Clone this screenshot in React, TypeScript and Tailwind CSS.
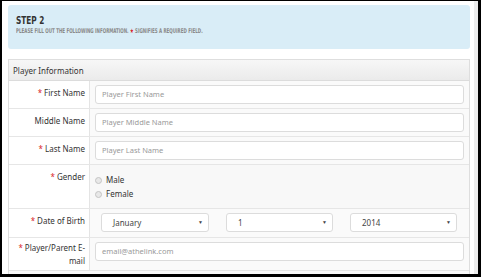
import React from "react";

const Star = () => <span className="text-[#d9262c] mr-[2px]">*</span>;

const Label = ({ req, children }: { req?: boolean; children: React.ReactNode }) => (
  <div className="w-[81px] shrink-0 border-r border-[#e4e4e4] bg-white pr-[4px] pt-[5px] text-right text-[8px] leading-[13px] text-[#333]">
    {req && <Star />}
    {children}
  </div>
);

const Input = ({ ph }: { ph: string }) => (
  <div className="h-[19px] w-full rounded-[3px] border border-[#dcdcdc] bg-white pl-[6px] text-[7.5px] leading-[17px] text-[#999]">
    {ph}
  </div>
);

const Select = ({ v, w }: { v: string; w: string }) => (
  <div className={`flex h-[19px] ${w} items-center justify-between rounded-[3px] border border-[#dcdcdc] bg-white pl-[11px] pr-[5px] text-[8px] text-[#444]`}>
    <span>{v}</span>
    <span className="text-[5px] text-[#444]">▼</span>
  </div>
);

export default function App() {
  return (
    <div className="h-[277px] w-[481px] bg-black pl-[2px] pt-[1px]" style={{ fontFamily: '"Noto Sans", "Liberation Sans", sans-serif' }}>
      <div className="flex h-[273px] w-[476px] overflow-hidden bg-white">
        <div className="w-[472px] shrink-0 pl-[6px] pt-[4px]">
          <div className="h-[44px] w-[462px] rounded-[3px] bg-[#d9edf7] pl-[8px] pt-[9px]" style={{ fontFamily: '"DejaVu Sans Condensed", "Liberation Sans", sans-serif' }}>
            <div className="origin-left scale-x-[0.78] text-[10.5px] font-bold leading-[12px] text-[#333]">STEP 2</div>
            <div className="mt-[1px] w-[400px] origin-left scale-x-[0.69] whitespace-nowrap text-[6.5px] font-bold leading-[9px] text-[#8a8a8a]">
              PLEASE FILL OUT THE FOLLOWING INFORMATION. <span className="text-[#d9262c]">★</span> SIGNIFIES A REQUIRED FIELD.
            </div>
          </div>
          <div className="mt-[10px] w-[462px] border border-[#dedede]">
            <div className="h-[21px] border-b border-[#dcdcdc] bg-gradient-to-b from-[#f7f7f7] to-[#ebebeb] pl-[4px] text-[8px] leading-[21px] text-[#333]">
              Player Information
            </div>
            <div className="flex h-[28px] border-b border-[#e6e6e6]">
              <Label req>First Name</Label>
              <div className="flex-1 bg-[#fafafa] px-[5px] pt-[4px]"><Input ph="Player First Name" /></div>
            </div>
            <div className="flex h-[28px] border-b border-[#e6e6e6]">
              <Label>Middle Name</Label>
              <div className="flex-1 bg-[#fafafa] px-[5px] pt-[4px]"><Input ph="Player Middle Name" /></div>
            </div>
            <div className="flex h-[28px] border-b border-[#e6e6e6]">
              <Label req>Last Name</Label>
              <div className="flex-1 bg-[#fafafa] px-[5px] pt-[4px]"><Input ph="Player Last Name" /></div>
            </div>
            <div className="flex h-[44px] border-b border-[#e6e6e6]">
              <Label req>Gender</Label>
              <div className="flex-1 bg-[#f8f8f8] pl-[5px] pt-[8px] text-[8px] text-[#333]">
                <div className="flex h-[14px] items-center gap-[4px]">
                  <span className="h-[7px] w-[7px] rounded-full border border-[#c4c4c4] bg-[#e8e8e8]" />
                  Male
                </div>
                <div className="flex h-[14px] items-center gap-[4px]">
                  <span className="h-[7px] w-[7px] rounded-full border border-[#c4c4c4] bg-[#e8e8e8]" />
                  Female
                </div>
              </div>
            </div>
            <div className="flex h-[29px] border-b border-[#e6e6e6]">
              <Label req>Date of Birth</Label>
              <div className="flex flex-1 gap-[17px] bg-[#fafafa] pl-[11px] pt-[4px]">
                <Select v="January" w="w-[108px]" />
                <Select v="1" w="w-[107px]" />
                <Select v="2014" w="w-[107px]" />
              </div>
            </div>
            <div className="flex h-[33px] border-b border-[#e6e6e6]">
              <div className="w-[81px] shrink-0 border-r border-[#e4e4e4] bg-white pr-[4px] pt-[3px] text-right text-[8px] leading-[13px] text-[#333]">
                <Star />Player/Parent E-<br />mail
              </div>
              <div className="flex-1 bg-[#fafafa] px-[5px] pt-[4px]"><Input ph="email@athelink.com" /></div>
            </div>
            <div className="h-[20px] bg-[#fafafa]" />
          </div>
        </div>
        <div className="h-full w-[4px] bg-[#ececec]" />
      </div>
    </div>
  );
}
